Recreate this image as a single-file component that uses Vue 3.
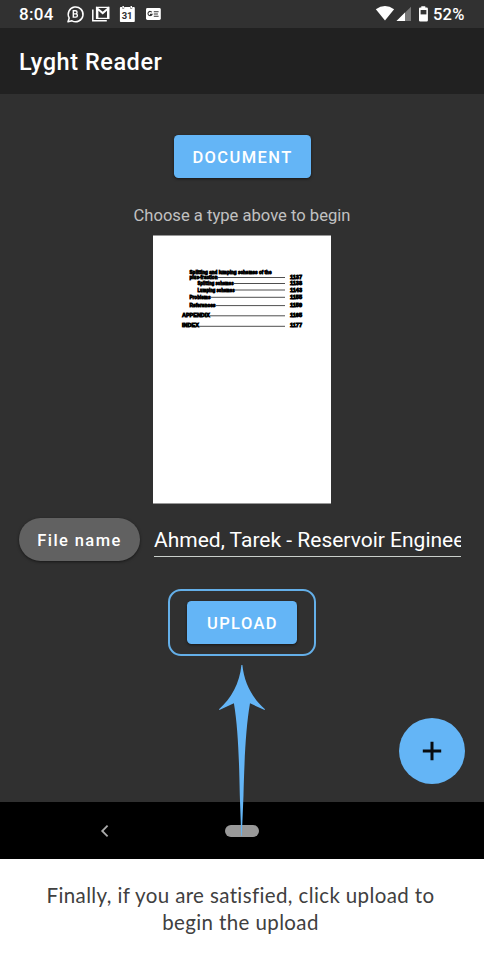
<script setup>
const contents = [
  { title: 'Splitting and lumping schemes of the', x: 189.5, y: 273.6, width: 82 },
  { title: 'plus-fraction', x: 189.5, y: 278.6, width: 28, line: 277.5, page: '1137' },
  { title: 'Splitting schemes', x: 197.5, y: 285, width: 36, line: 283.5, page: '1138' },
  { title: 'Lumping schemes', x: 197.5, y: 291.5, width: 37, line: 290, page: '1143' },
  { title: 'Problems', x: 189.5, y: 298.6, width: 21, line: 297.3, page: '1155' },
  { title: 'References', x: 189.5, y: 307, width: 26, line: 305.6, page: '1159' },
  { title: 'APPENDIX', x: 182, y: 316.8, width: 28, line: 315.8, page: '1165' },
  { title: 'INDEX', x: 182, y: 327.3, width: 17, line: 326.3, page: '1177' },
]
</script>

<template>
  <main class="screen">
    <header class="status">
      <span class="clock">8:04</span>
      <svg class="notices" width="96" height="20" viewBox="66 4 96 20">
        <path d="M68 21.8l1.2-3.8A7.4 7.4 0 1 1 72 20.8z" fill="none" stroke="#fff" stroke-width="1.5" stroke-linejoin="round" />
        <path d="M73.3 10.8h2.2a1.55 1.55 0 0 1 0 3.1h-2.2zM73.3 13.9h2.5a1.6 1.6 0 0 1 0 3.2h-2.5z" fill="none" stroke="#fff" stroke-width="1.4" />
        <path d="M92.8 9.5v11.2h14" fill="none" stroke="#fff" stroke-width="1.5" />
        <path d="M96.5 7.3h12.4v11H96.5z" fill="none" stroke="#fff" stroke-width="1.2" />
        <path d="M97.4 18V8.6l5.3 4.5 5.3-4.5V18" fill="none" stroke="#fff" stroke-width="2" />
        <path d="M120.6 7h1.6v1.4h2V7h6v1.4h2V7h1.6q1 0 1 1v13.2q0 .8-.9.8h-13.1q-.9 0-.9-.8V8q0-1 .7-1z" fill="#fff" />
        <path d="M122.4 5.9h1.5v2h-1.5zM130.5 5.9h1.5v2h-1.5z" fill="#fff" />
        <text x="127.1" y="18.7" text-anchor="middle" class="day">31</text>
        <rect x="146" y="8" width="14.8" height="12" rx="1.4" fill="#fff" />
        <path d="M151.8 12.3a2.1 2.1 0 1 0 .2 2.1h-2M153.8 11.8h4.8M153.8 14h4.1M153.8 16.2h4.8" fill="none" stroke="#333" stroke-width="1.1" />
      </svg>
      <svg class="signals" width="56" height="20" viewBox="375 4 56 20">
        <path d="M375.8 9.3Q385 2.8 394.1 9.3L385 20.6z" fill="#fff" />
        <path d="M396.5 21L411 6.7V21z" fill="#777" />
        <path d="M396.5 21l8.5-8.4V21z" fill="#fff" />
        <path d="M421.3 6.2h4v1.3h1.4q1.2 0 1.2 1.2v11.5q0 1.2-1.2 1.2h-6.5q-1.2 0-1.2-1.2V8.7q0-1.2 1.2-1.2h1.1z" fill="#fff" />
        <path d="M420.6 10h5.8v4.4h-5.8z" fill="#353535" />
      </svg>
      <span class="percent">52%</span>
    </header>

    <div class="appbar"><h1>Lyght Reader</h1></div>

    <section class="content">
      <button class="button document">DOCUMENT</button>
      <p class="hint">Choose a type above to begin</p>
      <svg class="page" width="178" height="269" viewBox="153 235 178 269">
        <rect x="153" y="235.5" width="178" height="268" fill="#fff" />
        <g v-for="row in contents" :key="row.title">
          <text class="entry" :x="row.x" :y="row.y" :textLength="row.width" lengthAdjust="spacingAndGlyphs">{{ row.title }}</text>
          <template v-if="row.page">
            <path :d="`M${row.x + row.width} ${row.line}H285`" stroke="#222" stroke-width=".8" />
            <text class="entry" x="290" :y="row.y" textLength="12" lengthAdjust="spacingAndGlyphs">{{ row.page }}</text>
          </template>
        </g>
      </svg>
      <div class="file">
        <span class="chip">File name</span>
        <div class="field"><span>Ahmed, Tarek - Reservoir Enginee</span></div>
      </div>
      <div class="focus"><button class="button upload">UPLOAD</button></div>
      <button class="fab" aria-label="Add">
        <svg width="20" height="20" viewBox="0 0 20 20"><path d="M10 .8v18.4M.8 10h18.4" stroke="#080c10" stroke-width="3" /></svg>
      </button>
    </section>

    <nav class="nav">
      <svg class="back" width="10" height="14" viewBox="0 0 10 14"><path d="M7.6 1.6L2.2 7l5.4 5.4" fill="none" stroke="#aaa" stroke-width="1.8" /></svg>
      <span class="home"></span>
    </nav>

    <svg class="arrow" width="50" height="174" viewBox="217 664 50 174">
      <path d="M241.4 665h1C244 683 253 699 265 709.2l-.4.9L250 703.3C245.5 729 244.3 765 243.5 795L241.8 836h-.6L239.8 795C239.2 765 238.3 729 233.9 703.3L219.4 710.1l-.4-.9C231 699 239.8 683 241.4 665z" fill="#64b5f6" />
    </svg>

    <p class="caption">Finally, if you are satisfied, click upload to<br />begin the upload</p>
  </main>
</template>

<style>
body { margin: 0; background: #fff; }
</style>

<style scoped>
* { box-sizing: border-box; }
.screen { position: relative; width: 484px; height: 958px; overflow: hidden; font-family: Roboto, sans-serif; background: #fff; }
h1, p { margin: 0; }
button { border: 0; padding: 0; font-family: inherit; }
svg { display: block; flex: none; }
.status { display: flex; align-items: center; height: 28px; padding: 0 16px 0 19px; background: #313131; color: #fff; font-size: 17px; font-weight: 500; }
.clock { width: 47px; letter-spacing: .3px; white-space: nowrap; }
.signals { margin-left: auto; }
.percent { width: 35px; margin-left: 2px; font-size: 16.5px; text-align: left; white-space: nowrap; letter-spacing: .2px; }
.day { font: 700 9.5px Roboto, sans-serif; fill: #333; }
.appbar { display: flex; align-items: center; height: 66px; padding: 2px 19px 0; background: #212121; color: #fff; }
h1 { font-size: 23.5px; font-weight: 500; letter-spacing: .55px; white-space: nowrap; }
.content { display: flex; flex-direction: column; align-items: center; height: 708px; padding-top: 41px; background: #303030; }
.button { height: 43px; padding-top: 1px; border-radius: 4.5px; background: #64b5f6; color: #fff; font-size: 16.5px; font-weight: 500; letter-spacing: 1.4px; text-indent: 1px; box-shadow: 0 1px 3px #0008; }
.document { width: 137px; }
.upload { width: 110px; }
.hint { margin-top: 27px; color: #c1c1c1; font-size: 16.6px; line-height: 22px; white-space: nowrap; }
.page { margin-top: 8px; }
.entry { font: 700 5px "Liberation Sans", sans-serif; fill: #000; stroke: #000; stroke-width: .8px; }
.file { display: flex; align-items: flex-start; align-self: stretch; height: 43px; margin-top: 14px; padding: 0 23px 0 19px; gap: 14px; }
.chip { width: 121px; height: 43px; flex: none; border-radius: 22px; background: #616161; color: #fff; font-size: 16.5px; font-weight: 500; line-height: 45px; letter-spacing: 1.4px; text-align: center; box-shadow: 0 1px 3px #0008; }
.field { flex: 1; min-width: 0; height: 39px; border-bottom: 1.5px solid #c9cfcb; color: #fff; overflow: hidden; white-space: nowrap; font-size: 21px; line-height: 44px; }
.focus { display: flex; align-items: center; justify-content: center; width: 148px; height: 67px; margin-top: 28px; border: 2px solid #64afe8; border-radius: 13px; }
.fab { display: flex; align-items: center; justify-content: center; align-self: flex-end; width: 66px; height: 66px; margin: 62px 19px 0 0; border-radius: 50%; background: #64b5f6; }
.nav { display: flex; align-items: center; height: 57px; padding-left: 100px; gap: 115px; background: #000; }
.home { width: 34px; height: 12px; border-radius: 6px; background: #999; }
.arrow { position: absolute; left: 217px; top: 664px; }
.caption { padding: 23px 3px 0 0; color: #404040; font: 400 20.5px/27px Lato, sans-serif; letter-spacing: .38px; font-variant-ligatures: none; text-align: center; white-space: nowrap; }
</style>
